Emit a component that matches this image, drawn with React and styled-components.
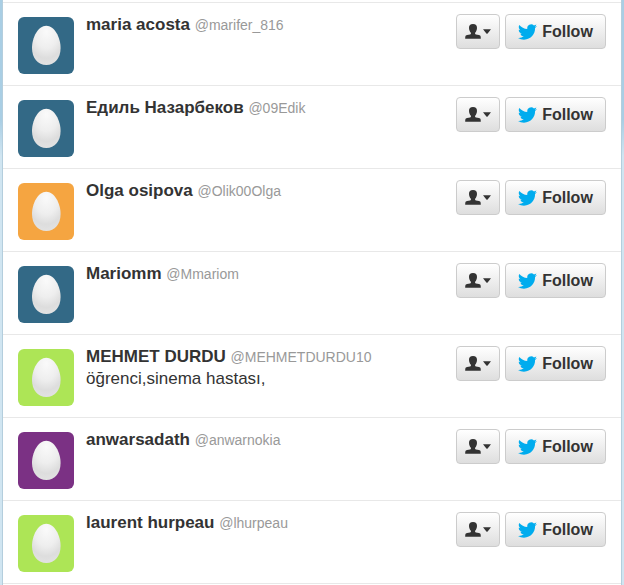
import React, { useId } from 'react';
import styled, { createGlobalStyle } from 'styled-components';

const users = [
  { name: 'maria acosta', handle: 'marifer_816', color: '#336986' },
  { name: 'Едиль Назарбеков', handle: '09Edik', color: '#336986' },
  { name: 'Olga osipova', handle: 'Olik00Olga', color: '#f5a541' },
  { name: 'Mariomm', handle: 'Mmariom', color: '#336986' },
  { name: 'MEHMET DURDU', handle: 'MEHMETDURDU10', color: '#ade556', bio: 'öğrenci,sinema hastası,' },
  { name: 'anwarsadath', handle: 'anwarnokia', color: '#7b3184' },
  { name: 'laurent hurpeau', handle: 'lhurpeau', color: '#ade556' },
];

const EggIcon = () => {
  const id = useId();

  return (
    <svg width="56" height="57" viewBox="0 0 56 57" aria-hidden="true">
      <defs>
        <radialGradient id={id} cx="0.5" cy="0.15" r="0.85">
          <stop offset="0" stopColor="#fafafa" />
          <stop offset="0.5" stopColor="#eeeeee" />
          <stop offset="0.8" stopColor="#dddddd" />
          <stop offset="1" stopColor="#e2e2e2" />
        </radialGradient>
      </defs>
      <path
        d="M28.3 8.7C36.5 8.7 42.6 20.5 42.6 31C42.6 41 36.8 48 28.3 48C19.8 48 14 41 14 31C14 20.5 20 8.7 28.3 8.7Z"
        fill={`url(#${id})`}
      />
    </svg>
  );
};

const PersonIcon = () => (
  <svg width="16" height="15" viewBox="0 0 16 15" fill="#333" aria-hidden="true">
    <path d="M8 0C5.3 0 3.9 1.6 4 4C4.1 6.2 4.9 7.8 5.9 8.7V9.9C5.3 10.7 2 10.6 0.9 11.6C0.2 12.3 0.2 13.5 0.2 14.8H15.8C15.8 13.5 15.8 12.3 15.1 11.6C14 10.6 10.7 10.7 10.1 9.9V8.7C11.1 7.8 11.9 6.2 12 4C12.1 1.6 10.7 0 8 0Z" />
  </svg>
);

const CaretIcon = () => (
  <svg width="8" height="5" viewBox="0 0 8 5" fill="#333" aria-hidden="true">
    <path d="M0 0.3H8L4.6 4.4Q4 5 3.4 4.4Z" />
  </svg>
);

const BirdIcon = () => (
  <svg width="19" height="16" viewBox="0 2.2 24 19.7" fill="#00acee" aria-hidden="true">
    <path d="M23.953 4.57a10 10 0 01-2.825.775 4.958 4.958 0 002.163-2.723c-.951.555-2.005.959-3.127 1.184a4.92 4.92 0 00-8.384 4.482C7.69 8.095 4.067 6.13 1.64 3.162a4.822 4.822 0 00-.666 2.475c0 1.71.87 3.213 2.188 4.096a4.904 4.904 0 01-2.228-.616v.06a4.923 4.923 0 003.946 4.827 4.996 4.996 0 01-2.212.085 4.936 4.936 0 004.604 3.417 9.867 9.867 0 01-6.102 2.105c-.39 0-.779-.023-1.17-.067a13.995 13.995 0 007.557 2.209c9.053 0 13.998-7.496 13.998-13.985 0-.21 0-.42-.015-.63A9.935 9.935 0 0024 4.59z" />
  </svg>
);

const App = () => (
  <>
    <GlobalStyle />
    <UserList>
      {users.map((user) => (
        <UserRow key={user.handle}>
          <Avatar $color={user.color}>
            <EggIcon />
          </Avatar>
          <UserInfo>
            <UserLink href={`#${user.handle}`}>
              <strong>{user.name}</strong> <Handle>@{user.handle}</Handle>
            </UserLink>
            {user.bio && <Bio>{user.bio}</Bio>}
          </UserInfo>
          <Actions>
            <MenuButton type="button" aria-label={`Options for ${user.name}`}>
              <PersonIcon />
              <CaretIcon />
            </MenuButton>
            <FollowButton type="button">
              <BirdIcon />
              Follow
            </FollowButton>
          </Actions>
        </UserRow>
      ))}
    </UserList>
  </>
);

// Styled components
const GlobalStyle = createGlobalStyle`
  * {
    box-sizing: border-box;
  }

  body {
    margin: 0;
    background: #d0e5f1 linear-gradient(#a9cee4 0, #a9cee4 120px, #d0e5f1 156px) no-repeat;
    color: #333;
    font-family: "Liberation Sans", Arial, sans-serif;
  }
`;

const UserList = styled.ul`
  list-style: none;
  margin: 0 2px;
  padding: 2px 0;
  background: #fff;
  border: solid #b4cedd;
  border-width: 0 1px;
`;

const UserRow = styled.li`
  display: flex;
  align-items: flex-start;
  padding: 11px 15px;
  border-top: 1px solid #e8e8e8;

  &:last-child {
    border-bottom: 1px solid #e8e8e8;
  }
`;

const Avatar = styled.div`
  flex: none;
  margin: 3px 12px 0 0;
  background: ${({ $color }) => $color};
  border-radius: 6px;

  svg {
    display: block;
  }
`;

const UserInfo = styled.div`
  flex: 1;
  min-width: 0;
  font-size: 17px;
  line-height: 22px;
`;

const UserLink = styled.a`
  display: block;
  color: #333;
  text-decoration: none;
`;

const Handle = styled.span`
  color: #999;
  font-size: 14px;
`;

const Bio = styled.p`
  margin: 0;
`;

const Actions = styled.div`
  display: flex;
  flex: none;
  gap: 5px;
`;

const Button = styled.button`
  display: flex;
  align-items: center;
  justify-content: center;
  height: 35px;
  padding: 0;
  color: #333;
  background: linear-gradient(#fff, #dedede);
  border: 1px solid #ccc;
  border-radius: 4px;
  font: bold 16px "Liberation Sans", Arial, sans-serif;
  cursor: pointer;
`;

const MenuButton = styled(Button)`
  gap: 2px;
  width: 44px;
`;

const FollowButton = styled(Button)`
  gap: 5px;
  width: 101px;
`;

export default App;
